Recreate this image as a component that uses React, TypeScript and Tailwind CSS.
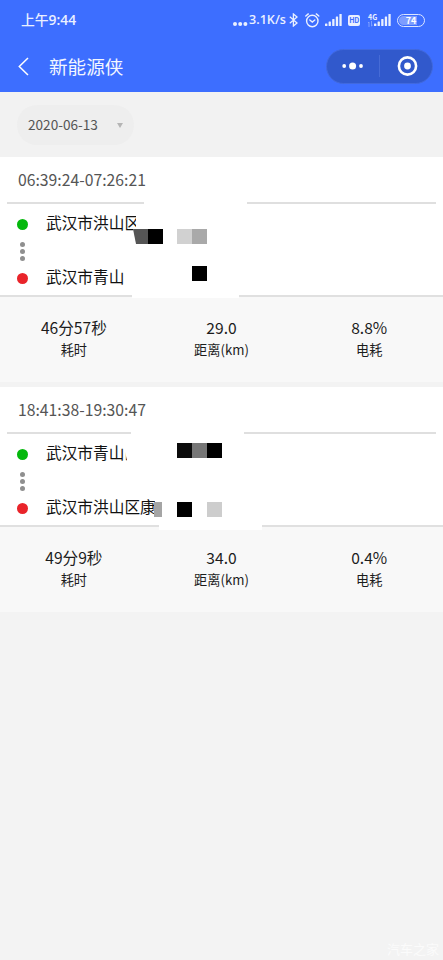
import React from 'react';

interface Block {
    x: number;
    y: number;
    w: number;
    h: number;
    color: string;
    clip?: string;
}

interface Trip {
    time: string;
    from: string;
    to: string;
    masks: Block[];
    stats: { value: string; label: string }[];
}

// masks are relative to the top left corner of each trip card
const trips: Trip[] = [
    {
        time: '06:39:24-07:26:21',
        from: '武汉市洪山区',
        to: '武汉市青山区',
        masks: [
            { x: 144, y: 44, w: 103, h: 20, color: '#fff' },
            { x: 133, y: 57, w: 107, h: 47, color: '#fff', clip: 'polygon(3px 0, 100% 0, 100% 100%, 0 100%, 0 13px, 3px 13px)' },
            { x: 124, y: 104, w: 117, h: 30, color: '#fff' },
            { x: 132, y: 134, w: 107, h: 7, color: '#fff' },
            { x: 133, y: 72, w: 15, h: 15, color: '#555', clip: 'polygon(0 0, 100% 0, 100% 100%, 20% 100%)' },
            { x: 148, y: 72, w: 15, h: 15, color: '#000' },
            { x: 177, y: 72, w: 15, h: 15, color: '#d1d1d1' },
            { x: 192, y: 72, w: 15, h: 15, color: '#a9a9a9' },
            { x: 192, y: 109, w: 15, h: 15, color: '#000' },
        ],
        stats: [
            { value: '46分57秒', label: '耗时' },
            { value: '29.0', label: '距离(km)' },
            { value: '8.8%', label: '电耗' },
        ],
    },
    {
        time: '18:41:38-19:30:47',
        from: '武汉市青山区',
        to: '武汉市洪山区康',
        masks: [
            { x: 131, y: 44, w: 113, h: 34, color: '#fff' },
            { x: 124, y: 55, w: 20, h: 8, color: '#fff' },
            { x: 124, y: 58, w: 20, h: 24, color: '#fff', clip: 'polygon(0 0, 100% 0, 100% 100%, 25% 100%, 0 10%)' },
            { x: 155, y: 108, w: 106, h: 26, color: '#fff' },
            { x: 159, y: 134, w: 103, h: 9, color: '#fff' },
            { x: 177, y: 56, w: 15, h: 15, color: '#0b0b0b' },
            { x: 192, y: 56, w: 15, h: 15, color: '#767676' },
            { x: 207, y: 56, w: 15, h: 15, color: '#000' },
            { x: 154, y: 115, w: 8, h: 15, color: '#a5a5a5' },
            { x: 177, y: 115, w: 15, h: 15, color: '#000' },
            { x: 207, y: 115, w: 15, h: 15, color: '#cdcdcd' },
        ],
        stats: [
            { value: '49分9秒', label: '耗时' },
            { value: '34.0', label: '距离(km)' },
            { value: '0.4%', label: '电耗' },
        ],
    },
];

const SignalIcon: React.FC = () => (
    <svg width="17" height="12" viewBox="0 0 17 12" fill="#eaf0ff">
        <rect x="0" y="9.5" width="2.4" height="2.5" rx="0.6" />
        <rect x="3.6" y="7.5" width="2.3" height="4.5" rx="0.6" />
        <rect x="7.2" y="5" width="2.3" height="7" rx="0.6" />
        <rect x="10.8" y="2.5" width="2.3" height="9.5" rx="0.6" />
        <rect x="14.4" y="0" width="2.3" height="12" rx="0.6" />
    </svg>
);

const StatusBar: React.FC = () => (
    <div className="flex h-10 items-center pl-[21px] text-[#eaf0ff]">
        <span className="w-[211px] font-['Open_Sans','Noto_Sans_CJK_SC',sans-serif] text-[13.8px] font-semibold"><span className="font-medium">上午</span>9:44</span>
        <svg width="16" height="12" viewBox="0 0 16 12" fill="currentColor" className="mt-px shrink-0">
            <circle cx="3" cy="9" r="2" />
            <circle cx="8.2" cy="9" r="2" />
            <circle cx="13.4" cy="9" r="2" />
        </svg>
        <span className="ml-px w-[40px] shrink-0 whitespace-nowrap font-['Open_Sans','Noto_Sans_CJK_SC',sans-serif] text-[12.6px] font-semibold">3.1K/s</span>
        <svg width="9" height="14" viewBox="0 0 9 14" fill="none" stroke="currentColor" strokeWidth="1.3" className="shrink-0">
            <path d="M0.8 3.8 L8 10 L4.4 13 V1 L8 4 L0.8 10.2" />
        </svg>
        <svg width="15" height="15" viewBox="0 0 15 15" fill="none" stroke="currentColor" strokeWidth="1.4" strokeLinecap="round" className="ml-[7px] shrink-0">
            <circle cx="7.3" cy="8" r="5.7" />
            <path d="M4.8 7 L7.3 9 L9.8 7" />
            <path d="M0.8 3 L3.3 0.9 M13.8 3 L11.3 0.9" />
        </svg>
        <span className="ml-[5px] shrink-0"><SignalIcon /></span>
        <span className="ml-[6px] flex h-[11px] w-[12px] shrink-0 items-center justify-center rounded-[2px] bg-[#eaf0ff] text-[7px] font-bold tracking-tighter text-[#3d6eff]">HD</span>
        <span className="ml-[8px] flex w-[6px] shrink-0 flex-col whitespace-nowrap text-[7px] font-bold leading-[7px]">
            <span>4G</span>
            <svg width="5" height="6" viewBox="0 0 5 6" fill="none" stroke="#8eabff" strokeWidth="0.8">
                <path d="M1 6 V1 L0 2 M3.5 0 V5 L4.7 4" />
            </svg>
        </span>
        <span className="shrink-0"><SignalIcon /></span>
        <span className="ml-[6px] flex h-[13px] w-[28px] shrink-0 items-center justify-center rounded-full border-[1.5px] border-[#dce6ff] p-px">
            <span className="flex h-[9px] w-full items-center justify-center rounded-full bg-linear-to-r from-[#7d9dff] from-75% to-[#3d6eff] to-75% text-[9px] font-bold leading-none text-white">74</span>
        </span>
    </div>
);

const NavBar: React.FC = () => (
    <div className="flex h-[52px] items-center pl-[18px] pr-[10px]">
        <svg width="11" height="19" viewBox="0 0 11 19" fill="none" stroke="#fff" strokeWidth="1.5">
            <path d="M10 1 L1.3 9.5 L10 18" />
        </svg>
        <h1 className="ml-[20px] flex-1 text-[18.6px] leading-none text-[#f2f6ff]">新能源侠</h1>
        <div className="flex h-[35px] w-[107px] items-center rounded-full border border-[#4169de] bg-[#3159cc]">
            <svg width="52" height="20" viewBox="0 0 52 20" fill="#fff">
                <circle cx="17.2" cy="10" r="1.9" />
                <circle cx="25.6" cy="10" r="3.5" />
                <circle cx="34" cy="10" r="1.9" />
            </svg>
            <span className="h-[22px] w-px bg-[#466bd6]" />
            <svg width="52" height="22" viewBox="0 0 52 22">
                <circle cx="27.5" cy="11" r="8.6" fill="none" stroke="#fff" strokeWidth="2.6" />
                <circle cx="27.5" cy="11" r="3.4" fill="#fff" />
            </svg>
        </div>
    </div>
);

const TripCard: React.FC<{ trip: Trip }> = ({ trip }) => (
    <section className="relative h-[230px] bg-white">
        <div className="mx-[7px] flex h-[47px] items-center border-b-2 border-[#dfdfdf] pl-[11px] text-[15.75px] text-[#555]">
            {trip.time}
        </div>
        <div className="flex h-[93px] border-b-2 border-[#e0e0e0] pl-[17px] pt-[7px]">
            <div className="flex w-[11px] flex-col items-center pt-[8px]">
                <span className="size-[11px] rounded-full bg-[#04b80c]" />
                <div className="flex h-[43px] flex-col items-center justify-center gap-[2.6px]">
                    <span className="size-[4.4px] rounded-full bg-[#8f8f8f]" />
                    <span className="size-[4.4px] rounded-full bg-[#8f8f8f]" />
                    <span className="size-[4.4px] rounded-full bg-[#8f8f8f]" />
                </div>
                <span className="size-[11px] rounded-full bg-[#e9242a]" />
            </div>
            <div className="ml-[18px] flex flex-col gap-[30px] text-[15.7px] leading-[24px] text-[#111]">
                <p>{trip.from}</p>
                <p>{trip.to}</p>
            </div>
        </div>
        <div className="grid h-[85px] grid-cols-3 bg-[#f8f8f8] pt-[18px] text-center text-[#1c1c1c]">
            {trip.stats.map((stat) => (
                <div key={stat.label}>
                    <p className="text-[15.6px] leading-[24px]">{stat.value}</p>
                    <p className="text-[13.2px] leading-[22px]">{stat.label}</p>
                </div>
            ))}
        </div>
        <div className="h-[5px] bg-[#f3f3f3]" />
        {trip.masks.map((m, i) => (
            <span
                key={i}
                className="absolute"
                style={{ left: m.x, top: m.y, width: m.w, height: m.h, background: m.color, clipPath: m.clip }}
            />
        ))}
    </section>
);

const App: React.FC = () => {
    return (
        <div className="relative h-[960px] w-[443px] overflow-hidden bg-[#f3f3f3] font-['Noto_Sans_CJK_SC',sans-serif]">
            <header className="h-[92px] bg-[#3d6eff]">
                <StatusBar />
                <NavBar />
            </header>
            <div className="flex h-[65px] items-center bg-[#f2f2f2] pl-[17px]">
                <button className="flex h-[40px] w-[117px] items-center justify-between rounded-full bg-[#eeeeee] pl-[11px] pr-[11px] text-[13.6px] text-[#555]">
                    2020-06-13
                    <svg width="6" height="5" viewBox="0 0 6 5" fill="#b5b5b5" className="mt-[2px]">
                        <path d="M0 0 H6 L3 5 Z" />
                    </svg>
                </button>
            </div>
            <main>
                {trips.map((trip) => (
                    <TripCard key={trip.time} trip={trip} />
                ))}
            </main>
            <div className="absolute bottom-[2px] right-[4px] text-[13px] leading-[18px] text-[#fbfbfb]">汽车之家</div>
        </div>
    );
};

export default App;
